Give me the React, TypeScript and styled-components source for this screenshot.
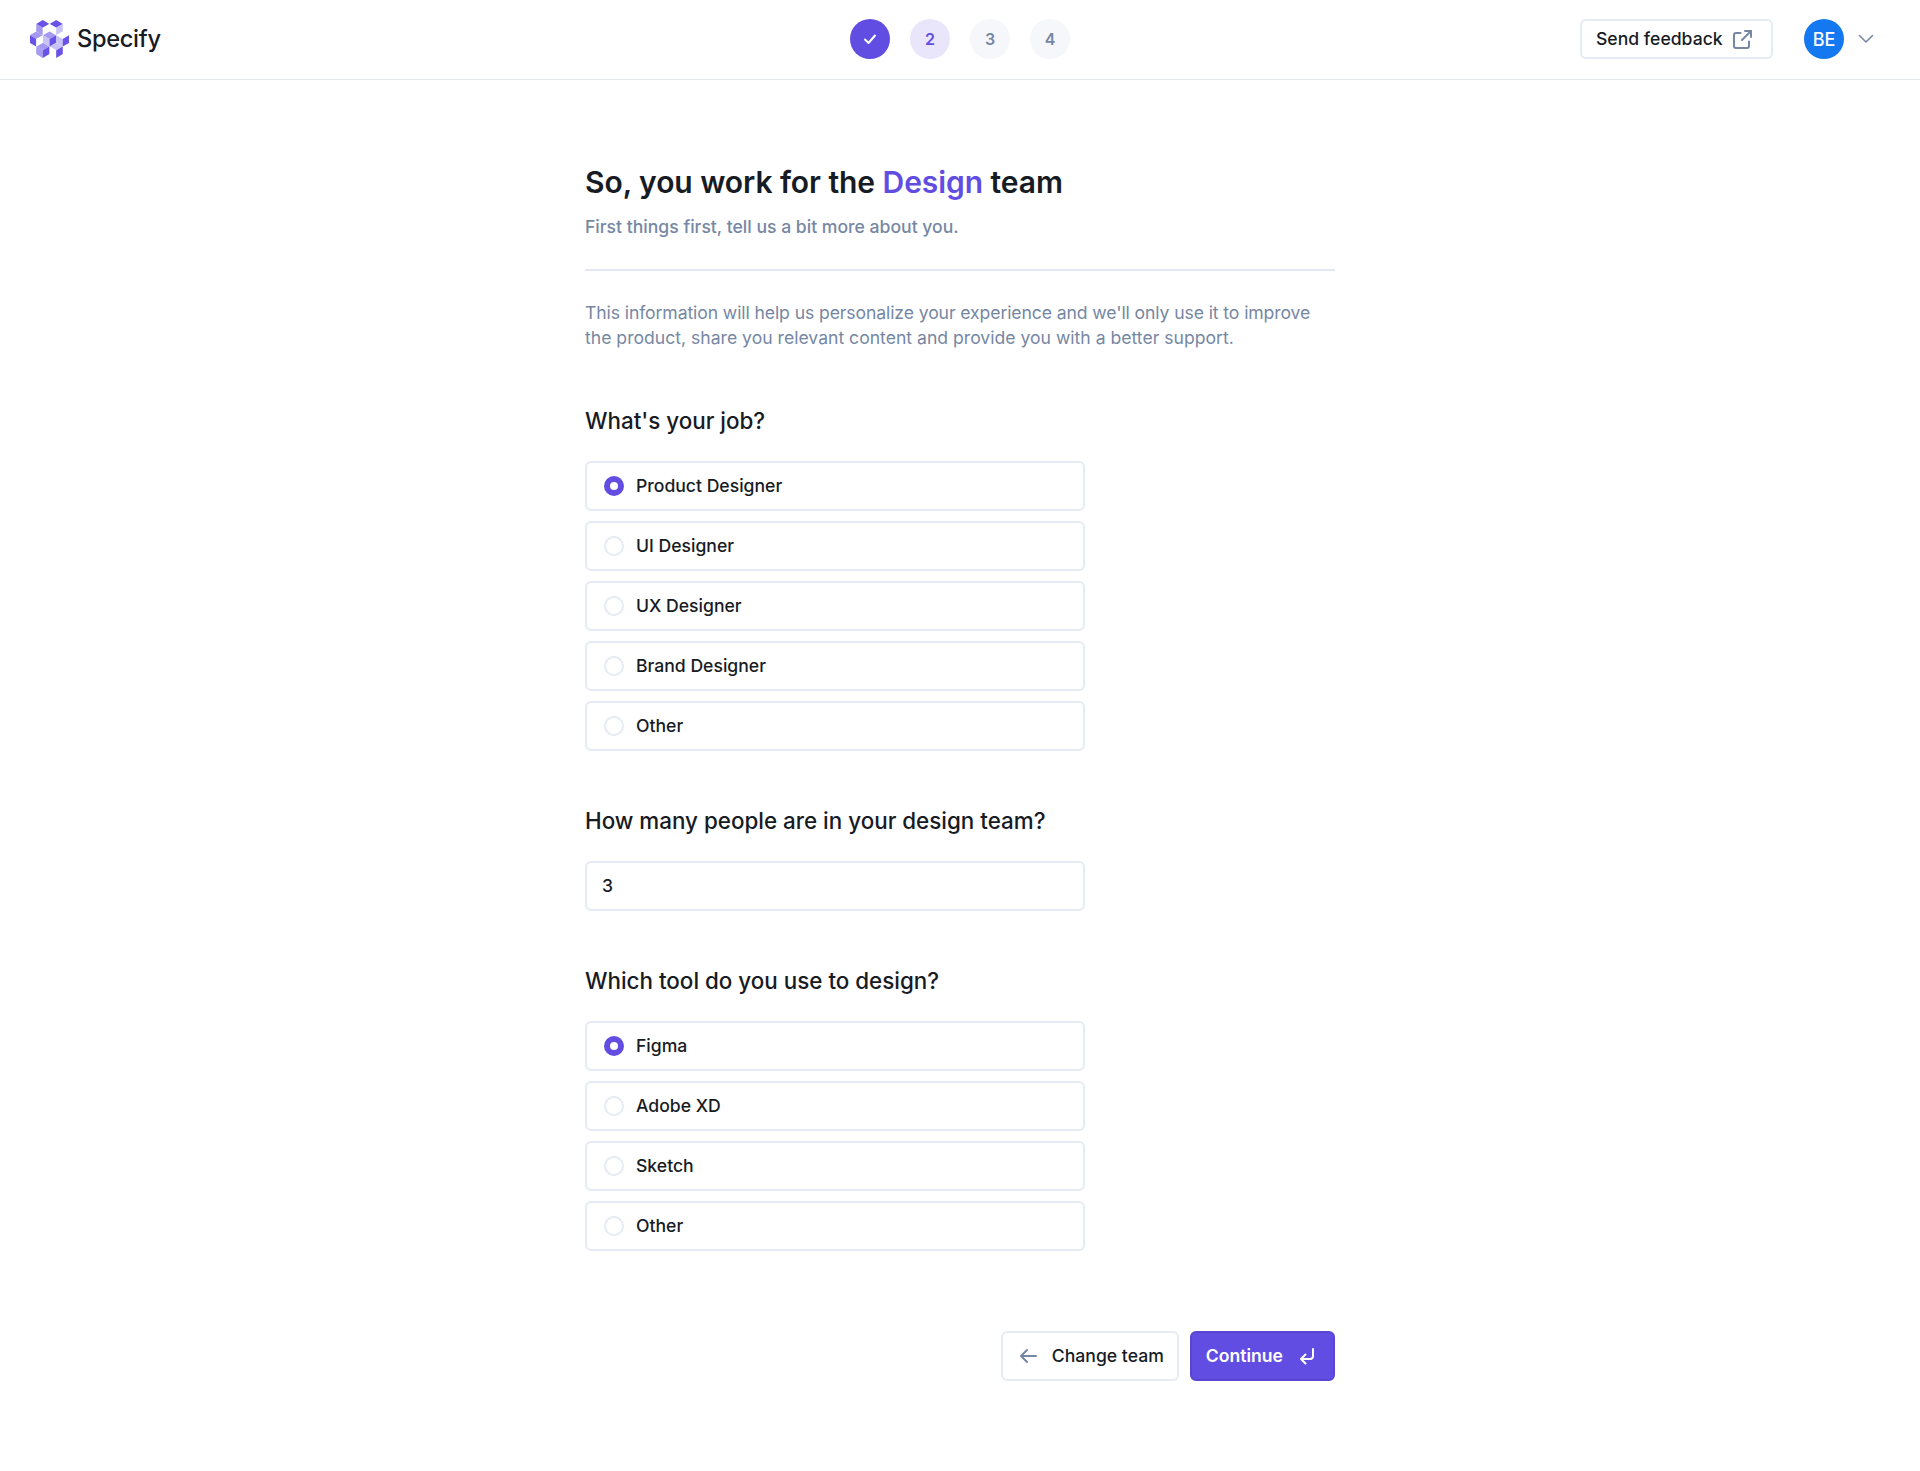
import React from "react";
import styled, { createGlobalStyle } from "styled-components";

const Global = createGlobalStyle`
  * { box-sizing: border-box; }
  html, body { margin: 0; padding: 0; background: #fff; }
  body { font-family: Inter, "Liberation Sans", sans-serif; color: #171b24; }
`;

const Page = styled.div`
  min-height: 1471px;
  display: flex;
  flex-direction: column;
`;

const Header = styled.header`
  height: 80px;
  border-bottom: 1px solid #e3e8f1;
  padding: 0 30px 1px;
  display: grid;
  grid-template-columns: 1fr auto 1fr;
  align-items: center;
`;

const Brand = styled.div`
  display: flex;
  align-items: center;
  gap: 8px;
`;

const BrandName = styled.span`
  font-size: 23.6px;
  font-weight: 500;
  letter-spacing: -0.3px;
  margin-bottom: 2px;
`;

const Steps = styled.div`
  display: flex;
  gap: 20px;
`;

const Step = styled.div<{ $state: "done" | "current" | "todo" }>`
  width: 40px;
  height: 40px;
  border-radius: 50%;
  display: flex;
  align-items: center;
  justify-content: center;
  font-size: 16px;
  font-weight: 600;
  background: ${(p) => (p.$state === "done" ? "#614de2" : p.$state === "current" ? "#e9e5fb" : "#f6f7fb")};
  color: ${(p) => (p.$state === "done" ? "#fff" : p.$state === "current" ? "#614de2" : "#7687a3")};
`;

const HeaderRight = styled.div`
  display: flex;
  align-items: center;
  justify-content: flex-end;
  padding-right: 16px;
`;

const Label = styled.span`
  margin-bottom: 2px;
`;

const Feedback = styled.button`
  height: 40px;
  width: 193px;
  padding: 0 17px 0 14px;
  display: flex;
  align-items: center;
  justify-content: space-between;
  background: #fff;
  border: 2px solid #e6eaf3;
  border-radius: 6px;
  font: 500 17.6px Inter, sans-serif;
  color: #171b24;
`;

const Avatar = styled.div`
  margin-left: 31px;
  width: 40px;
  height: 40px;
  border-radius: 50%;
  background: #1478f0;
  color: #fff;
  display: flex;
  align-items: center;
  justify-content: center;
  font-size: 18px;
  font-weight: 500;
`;

const Chevron = styled.svg`
  margin-left: 14px;
  width: 16px;
  height: 10px;
`;

const Main = styled.main`
  width: 750px;
  margin: 0 auto;
  padding-top: 80px;
  display: flex;
  flex-direction: column;
`;

const Title = styled.h1`
  margin: 0;
  font-size: 30px;
  line-height: 44px;
  font-weight: 600;
  letter-spacing: -0.05px;
`;

const Accent = styled.span`
  color: #614de2;
`;

const Subtitle = styled.p`
  margin: 11px 0 0;
  font-size: 17.6px;
  line-height: 24px;
  font-weight: 500;
  color: #7687a3;
`;

const Divider = styled.hr`
  margin: 30px 0 0;
  border: 0;
  height: 2px;
  background: #e3e8f1;
`;

const Intro = styled.p`
  margin: 29px 0 0;
  font-size: 17.6px;
  line-height: 25px;
  font-weight: 400;
  color: #7687a3;
`;

const IntroLine = styled.span<{ $tight?: boolean }>`
  display: block;
  white-space: nowrap;
  letter-spacing: ${(p) => (p.$tight ? "-0.1px" : "0")};
`;

const Question = styled.h2<{ $top: number }>`
  margin: ${(p) => p.$top}px 0 0;
  font-size: 22.4px;
  line-height: 30px;
  font-weight: 500;
`;

const Options = styled.div`
  margin-top: 25px;
  width: 500px;
  display: flex;
  flex-direction: column;
  gap: 10px;
`;

const Option = styled.div`
  height: 50px;
  padding: 0 17px;
  display: flex;
  align-items: center;
  gap: 12px;
  background: #fff;
  border: 2px solid #e6eaf3;
  border-radius: 6px;
  font-size: 17.6px;
  font-weight: 500;
`;

const Radio = styled.span<{ $on?: boolean }>`
  width: 20px;
  height: 20px;
  border-radius: 50%;
  flex: none;
  background: #fff;
  border: ${(p) => (p.$on ? "6px solid #614de2" : "2px solid #e6eaf3")};
`;

const NumberField = styled.div`
  margin-top: 25px;
  width: 500px;
  height: 50px;
  padding: 0 15px;
  display: flex;
  align-items: center;
  border: 2px solid #e6eaf3;
  border-radius: 6px;
  font-size: 17.6px;
  font-weight: 500;
`;

const Actions = styled.div`
  margin-top: 80px;
  display: flex;
  justify-content: flex-end;
  gap: 11px;
`;

const Button = styled.button<{ $primary?: boolean }>`
  height: 50px;
  display: flex;
  align-items: center;
  gap: ${(p) => (p.$primary ? 12 : 12)}px;
  padding: ${(p) => (p.$primary ? "0 14px" : "0 13px")};
  border-radius: 6px;
  border: ${(p) => (p.$primary ? "2px solid #5845d4" : "2px solid #e6eaf3")};
  background: ${(p) => (p.$primary ? "#614de2" : "#fff")};
  color: ${(p) => (p.$primary ? "#fff" : "#171b24")};
  font: ${(p) => (p.$primary ? 600 : 500)} 17.6px Inter, sans-serif;
`;

const Icon = styled.svg`
  width: 24px;
  height: 24px;
  flex: none;
  fill: none;
  stroke: currentColor;
  stroke-width: 2;
  stroke-linecap: round;
  stroke-linejoin: round;
`;

const MutedIcon = styled(Icon)`
  color: #7687a3;
`;

const DARK = "#6a52e6";
const MID = "#a598f0";
const PALE = "#c9c2f6";
const NONE = "#ffffff";

const R = 7.6;
const W = R * 0.866;
const cubes: [number, number, string, string, string][] = [
  [-6.7, -11.3, DARK, MID, NONE],
  [6.7, -11.3, DARK, NONE, PALE],
  [13.2, 0, NONE, PALE, DARK],
  [6.7, 11.3, PALE, NONE, DARK],
  [-6.7, 11.3, MID, MID, DARK],
  [-13.2, 0, MID, DARK, NONE],
  [0, 0, MID, PALE, DARK],
];

const pts = (a: number[][], x: number, y: number) =>
  a.map(([u, v]) => `${(u + x).toFixed(2)},${(v + y).toFixed(2)}`).join(" ");

const Logo = () => (
  <svg width="39" height="38" viewBox="-19.5 -19 39 38" aria-hidden>
    {cubes.map(([x, y, top, left, right], i) => (
      <g key={i}>
        <polygon points={pts([[0, -R], [W, -R / 2], [0, 0], [-W, -R / 2]], x, y)} fill={top} />
        <polygon points={pts([[-W, -R / 2], [0, 0], [0, R], [-W, R / 2]], x, y)} fill={left} />
        <polygon points={pts([[W, -R / 2], [W, R / 2], [0, R], [0, 0]], x, y)} fill={right} />
      </g>
    ))}
  </svg>
);

const jobs = ["Product Designer", "UI Designer", "UX Designer", "Brand Designer", "Other"];
const tools = ["Figma", "Adobe XD", "Sketch", "Other"];

const OptionList = ({ items }: { items: string[] }) => (
  <Options>
    {items.map((item, i) => (
      <Option key={item}>
        <Radio $on={i === 0} />
        <Label>{item}</Label>
      </Option>
    ))}
  </Options>
);

export default function App() {
  return (
    <Page>
      <Global />
      <Header>
        <Brand>
          <Logo />
          <BrandName>Specify</BrandName>
        </Brand>
        <Steps>
          <Step $state="done">
            <Icon viewBox="0 0 24 24">
              <path d="M7 12.5 10.5 16 17 8.5" />
            </Icon>
          </Step>
          <Step $state="current">2</Step>
          <Step $state="todo">3</Step>
          <Step $state="todo">4</Step>
        </Steps>
        <HeaderRight>
          <Feedback>
            <Label>Send feedback</Label>
            <MutedIcon viewBox="0 0 24 24">
              <path d="M15 4h6v6" />
              <path d="M21 4 12 13" />
              <path d="M19 14.5V19a2 2 0 0 1-2 2H6a2 2 0 0 1-2-2V8a2 2 0 0 1 2-2h4.5" />
            </MutedIcon>
          </Feedback>
          <Avatar>BE</Avatar>
          <Chevron viewBox="0 0 16 10" fill="none" stroke="#7687a3" strokeWidth="1.6" strokeLinecap="round" strokeLinejoin="round">
            <path d="M1.5 1.5 8 8l6.5-6.5" />
          </Chevron>
        </HeaderRight>
      </Header>
      <Main>
        <Title>
          So, you work for the <Accent>Design</Accent> team
        </Title>
        <Subtitle>First things first, tell us a bit more about you.</Subtitle>
        <Divider />
        <Intro>
          <IntroLine $tight>This information will help us personalize your experience and we'll only use it to improve</IntroLine>
          <IntroLine>the product, share you relevant content and provide you with a better support.</IntroLine>
        </Intro>
        <Question $top={56}>What's your job?</Question>
        <OptionList items={jobs} />
        <Question $top={55}>How many people are in your design team?</Question>
        <NumberField>
          <Label>3</Label>
        </NumberField>
        <Question $top={55}>Which tool do you use to design?</Question>
        <OptionList items={tools} />
        <Actions>
          <Button>
            <MutedIcon viewBox="0 0 24 24">
              <path d="M20 12H5M11 6l-6 6 6 6" />
            </MutedIcon>
            <Label>Change team</Label>
          </Button>
          <Button $primary>
            <Label>Continue</Label>
            <Icon viewBox="0 0 24 24">
              <path d="M18 5v7a3 3 0 0 1-3 3H6M10.5 10.5 6 15l4.5 4.5" />
            </Icon>
          </Button>
        </Actions>
      </Main>
    </Page>
  );
}
